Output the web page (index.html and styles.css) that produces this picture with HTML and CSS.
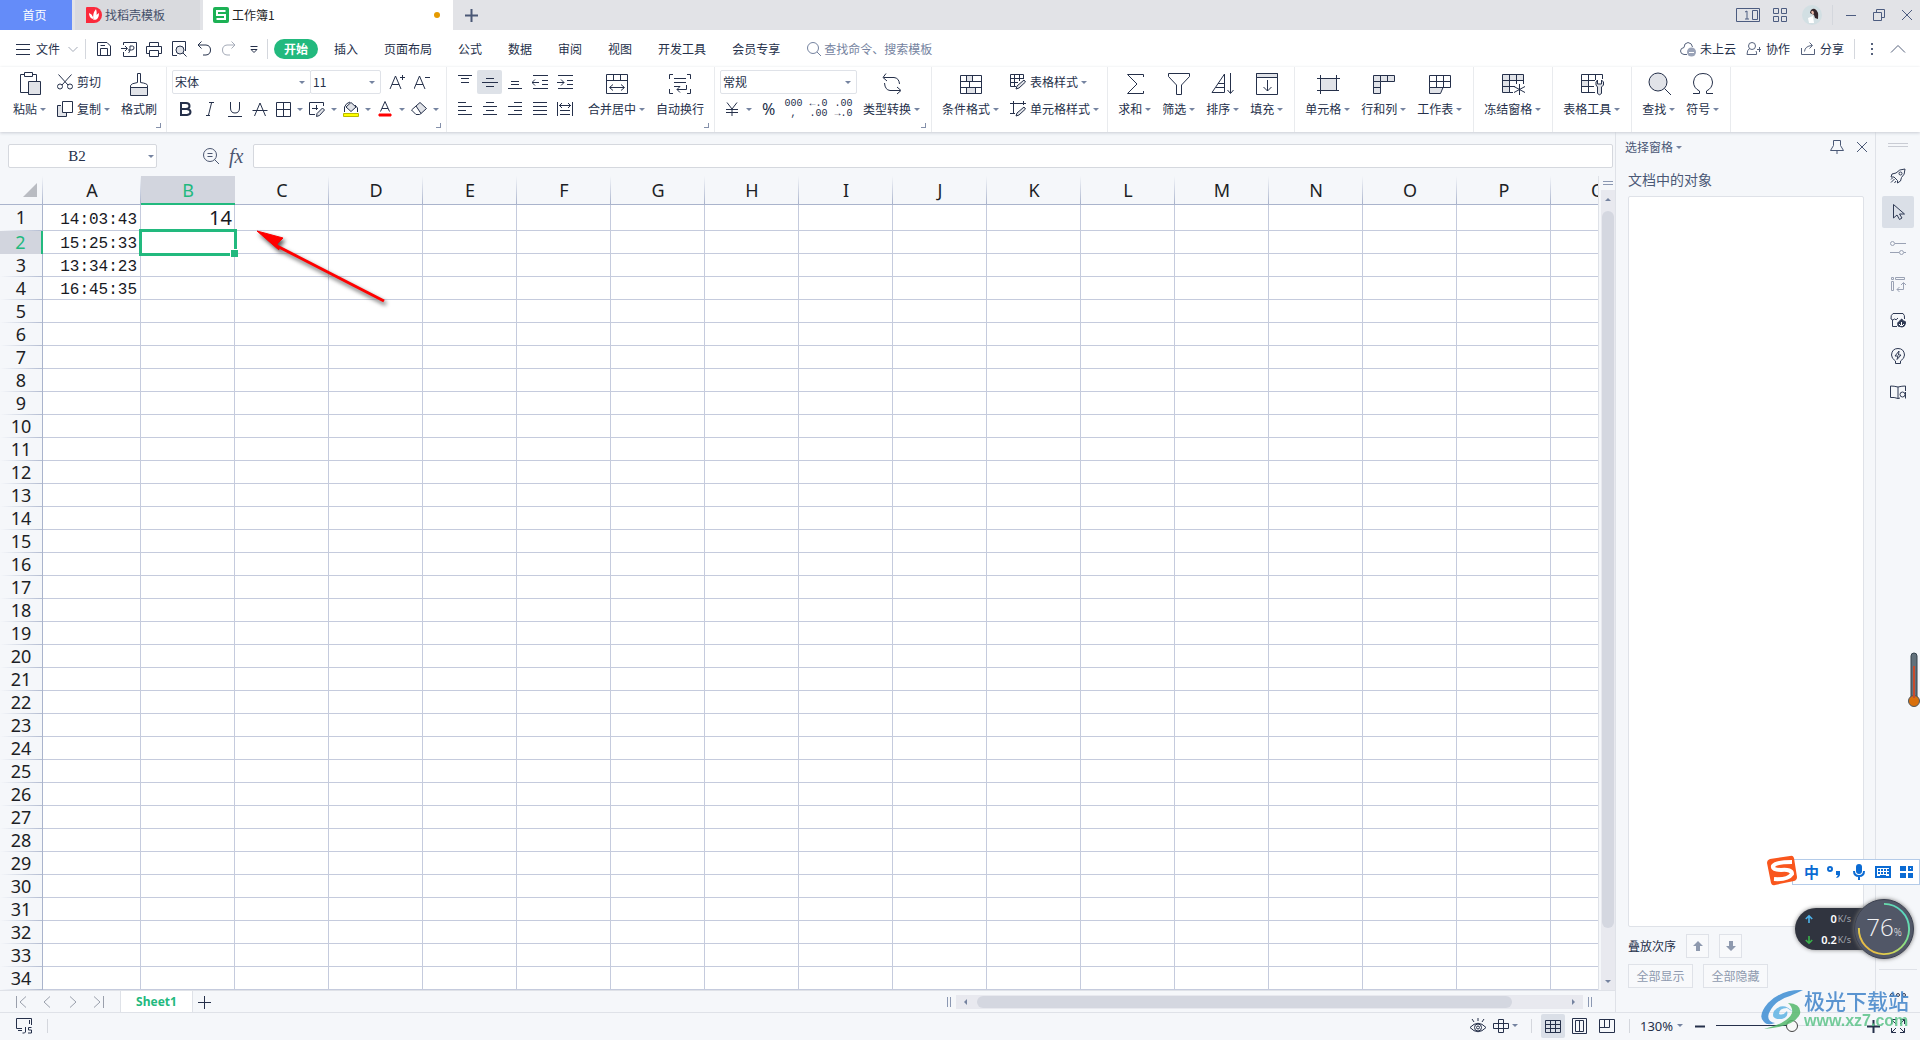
FILE: index.html
```html
<!DOCTYPE html>
<html lang="zh-CN">
<head>
<meta charset="utf-8">
<title>工作簿1</title>
<link rel="stylesheet" href="styles.css">
</head>
<body>
<svg class="sprite" aria-hidden="true">
  <symbol id="save" viewBox="0 0 16 16"><path d="M1.5 14.500V1.500H11L14.500 5V14.500ZM4.500 14V7.500H11.500V14M4.500 4.500H9"/></symbol>
  <symbol id="pdf" viewBox="0 0 16 16"><path d="M2.500 4V1.500H15.500V15.500H2.500V11M0 7.500H6M4 5L6.500 7.500L4 10M7.500 12C9 11 9 8 9 5H11.500Q13 5 13 7T10.500 9H7"/></symbol>
  <symbol id="print" viewBox="0 0 16 16"><path d="M3.500 5V1.500H12.500V5M3.500 12.500H.500V5.500H15.500V12.500H12.500M3.500 9.500H12.500V15.500H3.500Z"/></symbol>
  <symbol id="preview" viewBox="0 0 16 16"><path d="M6 14.500H1.500V.500H14.500V10"/><circle class="tint" cx="9" cy="9" r="4"/><path d="M12 12L15.500 15.500"/></symbol>
  <symbol id="undo" viewBox="0 0 16 16"><path d="M5.500 .500L2 4L5.500 7.500M2 4H10Q14.500 4.500 14.500 9T10 14H7"/></symbol>
  <symbol id="redo" viewBox="0 0 16 16"><path d="M10.500 .500L14 4L10.500 7.500M14 4H6Q1.500 4.500 1.500 9T6 14H9"/></symbol>
  <symbol id="more" viewBox="0 0 16 16"><path d="M4.500 5.500H11.500M5 8.500L8 11.500L11 8.500Z"/></symbol>
  <symbol id="burger" viewBox="0 0 16 16"><path d="M1 3.500H15M1 8.500H15M1 13.500H15"/></symbol>
  <symbol id="down" viewBox="0 0 16 16"><path d="M3.500 6L8 10.500L12.500 6"/></symbol>
  <symbol id="up" viewBox="0 0 16 16"><path d="M1 11.500L8 4.500L15 11.500"/></symbol>
  <symbol id="search" viewBox="0 0 16 16"><circle cx="7" cy="7" r="5.500"/><path d="M11 11L15 15"/></symbol>
  <symbol id="cloud" viewBox="0 0 16 16"><path d="M7 13.500H4Q.500 13 .500 10T4 6.500Q4 2 8 1.500Q12 2 12.500 6"/><circle class="solid" cx="11.500" cy="11" r="4.500"/><path d="M9 11.500H14" stroke="#fff"/></symbol>
  <symbol id="collab" viewBox="0 0 16 16"><circle cx="6" cy="5" r="3.500"/><path d="M3.500 7.500Q1 9 1 13.500H10.500Q11 12 10 10M11 8.500H15M13.500 6V11"/></symbol>
  <symbol id="share" viewBox="0 0 16 16"><path d="M1.500 7V13.500H14.500V8M4.500 10.500Q5 5 12 4.500M9.500 1.500L12.500 4.500L9.500 7.500"/></symbol>

  <symbol id="paste" viewBox="0 0 24 24"><path d="M11 20.500H2.500V2.500H6M15 2.500H18.500V9M6.500 .500H14.500V4.500H6.500Z"/><path class="tint" d="M10.500 9.500H22.500V22.500H10.500Z"/></symbol>
  <symbol id="brush" viewBox="0 0 24 24"><path d="M3.500 22.500V13.500Q4 11.500 10.500 10.500V1.500H13.500V10.500Q20.500 11.500 20.500 13.500V16M3.500 15.500H20.500"/><path class="tint" d="M3.500 15.500H20.500V23.500H3.500Z"/></symbol>
  <symbol id="cut" viewBox="0 0 16 16"><circle cx="3" cy="12.500" r="2.500"/><circle cx="13" cy="12.500" r="2.500"/><path d="M1.500 .500L11 11M14.500 .500L5 11"/></symbol>
  <symbol id="copy" viewBox="0 0 16 16"><path class="tint" d="M4 4.500H.500V15.500H9.500V12"/><path class="paper" d="M5.500 .500H15.500V11.500H5.500Z"/></symbol>
  <symbol id="font-plus" viewBox="0 0 16 16"><path d="M1 15L6.500 2L12 15M3 10.500H10M11 3.500H16M13.500 1V6"/></symbol>
  <symbol id="font-minus" viewBox="0 0 16 16"><path d="M0 15L5.500 2L11 15M2 10.500H9M11 3.500H16"/></symbol>
  <symbol id="bold" viewBox="0 0 16 16"><path stroke-width="2" d="M3 2H9Q12.500 2 12.500 5T9 8H4M4 2V14M3 14H10Q13.500 13.500 13.500 11T10 8"/></symbol>
  <symbol id="italic" viewBox="0 0 16 16"><path d="M7 1.500H12M4 14.500H8M9.500 2L6.500 14"/></symbol>
  <symbol id="underline" viewBox="0 0 16 16"><path d="M3.500 1V7Q3.500 12 8 12T12.500 7V1M1 15.500H15"/></symbol>
  <symbol id="strike" viewBox="0 0 16 16"><path d="M2.500 15L8 2L13.500 15M.500 9.500H15.500"/></symbol>
  <symbol id="border" viewBox="0 0 16 16"><path d="M1.500 1.500H15.500V15.500H1.500ZM8.500 1.500V15.500M1.500 8.500H15.500"/></symbol>
  <symbol id="draw" viewBox="0 0 16 16"><path d="M6 13.500H.500V1.500H14.500V5M3 7.500H9M7.500 4V9" /><path class="tint" d="M7.500 15.500L8 12.500L13.500 7L15.500 9L10.500 14.500Z"/></symbol>
  <symbol id="fill-color" viewBox="0 0 16 16"><path class="tint" d="M3 6L8 1.500L13 6L8 10.500Z"/><path d="M1.500 11V6Q3 2 7 1M14.500 11V7L12 4"/><path fill="#ff0" stroke="#b9b900" d="M.500 12.500H15.500V15.500H.500Z"/></symbol>
  <symbol id="text-color" viewBox="0 0 16 16"><path d="M3.500 10.500L8 .500L12.500 10.500M5 7.500H11"/><path fill="red" stroke="red" d="M2 13H14V15H2Z"/></symbol>
  <symbol id="eraser" viewBox="0 0 16 16"><path class="tint" d="M5 5L9 1.500L15.500 7.500L10 12.500Z"/><path d="M5 5L.500 9L5 13.500H8.500L10 12.500"/></symbol>
  <symbol id="v-top" viewBox="0 0 16 16"><path d="M1 1.500H15M4 4.500H12M4 8.500H12"/></symbol>
  <symbol id="v-mid" viewBox="0 0 16 16"><path d="M4 4.500H12M0 8.500H16M4 12.500H12"/></symbol>
  <symbol id="v-bot" viewBox="0 0 16 16"><path d="M4 7.500H12M4 10.500H12M1 14.500H15"/></symbol>
  <symbol id="outdent" viewBox="0 0 16 16"><path d="M1 1.500H16M10 6.500H16M10 10.500H16M1 14.500H16M0 8.500H7M3 5.500L0 8.500L3 11.500"/></symbol>
  <symbol id="indent" viewBox="0 0 16 16"><path d="M1 1.500H16M10 6.500H16M10 10.500H16M1 14.500H16M0 8.500H7M4 5.500L7 8.500L4 11.500"/></symbol>
  <symbol id="left" viewBox="0 0 16 16"><path d="M1 1.500H9M1 5.500H15M1 9.500H9M1 13.500H15"/></symbol>
  <symbol id="center" viewBox="0 0 16 16"><path d="M4 1.500H12M1 5.500H15M4 9.500H12M1 13.500H15"/></symbol>
  <symbol id="right" viewBox="0 0 16 16"><path d="M7 1.500H15M1 5.500H15M7 9.500H15M1 13.500H15"/></symbol>
  <symbol id="justify" viewBox="0 0 16 16"><path d="M1 1.500H15M1 5.500H15M1 9.500H15M1 13.500H15"/></symbol>
  <symbol id="distribute" viewBox="0 0 16 16"><path d="M.500 1V15M15.500 1V15M2 4.500H14M5 2L2.500 4.500L5 7M11 2L13.500 4.500L11 7M3 9.500H13M3 13.500H13"/></symbol>
  <symbol id="merge" viewBox="0 0 24 24"><path d="M1.500 2.500H22.500V21.500H1.500ZM1.500 8.500H22.500M8.500 2.500V8.500M15.500 2.500V8.500M5 15.500H19M8 12.500L4.500 15.500L8 18.500M16 12.500L19.500 15.500L16 18.500"/></symbol>
  <symbol id="wrap" viewBox="0 0 24 24"><path d="M5 2.500H1.500V7M19 2.500H22.500V7M1.500 17V21.500H5M22.500 17V21.500H19M6 6.500H18M6 10.500H18M6 14.500H12M18.500 13V17.500H9M12 14.500L9 17.500L12 20.500"/></symbol>
  <symbol id="yen" viewBox="0 0 16 16"><path d="M3 1.500L8 8L13 1.500M8 8V15M2 8.500H14M2 11.500H14"/></symbol>
  <symbol id="convert" viewBox="0 0 24 24"><path d="M6 1.500L3 5.500L7 9M3.500 5.500H14Q19 6 19.500 12M4.500 11Q5 18 10 18.500H20M17 15L21 18.500L17 22"/></symbol>
  <symbol id="cond" viewBox="0 0 24 24"><path class="tint" d="M7.500 3.500H13.500V9.500H7.500ZM7.500 15.500H16.500V21.500H7.500Z"/><path d="M1.500 3.500H22.500V21.500H1.500ZM1.500 9.500H22.500M1.500 15.500H22.500M7.500 3.500V9.500M13.500 3.500V9.500M10.500 9.500V15.500M7.500 15.500V21.500M16.500 15.500V21.500"/></symbol>
  <symbol id="table-style" viewBox="0 0 16 16"><path d="M6 12.500H.500V.500H13.500V5M.500 4.500H13.500M.500 8.500H8M4.500 .500V12.500M9.500 .500V7"/><path class="tint" d="M6 15L7 12L14 6L15.500 8L9 14Z"/></symbol>
  <symbol id="cell-style" viewBox="0 0 16 16"><path d="M0 2.500H16M3.500 0V12.500M0 12.500H5M13.500 0V4"/><path class="tint" d="M6 15L7 12L14 6L15.500 8L9 14Z"/></symbol>
  <symbol id="sum" viewBox="0 0 24 24"><path d="M20.500 5V2.500H4.500L14 12L4.500 21.500H20.500V19"/></symbol>
  <symbol id="filter" viewBox="0 0 24 24"><path d="M1.500 1.500H22.500V4.500L14.500 13V22.500H9.500V13L1.500 4.500Z"/></symbol>
  <symbol id="sort" viewBox="0 0 24 24"><path d="M1 20.500L13.500 2V20.500ZM7 11.500H13M5 15.500H13M19.500 1V21M16.500 18L19.500 21.500L22.500 18"/></symbol>
  <symbol id="fill" viewBox="0 0 24 24"><path d="M1.500 1.500H22.500V22.500H1.500Z"/><path class="tint" d="M1.500 1.500H22.500V5.500H1.500Z"/><path d="M12.500 8V19M8.500 15L12.500 19L16.500 15"/></symbol>
  <symbol id="cell" viewBox="0 0 24 24"><path class="tint" d="M4.500 6.500H20.500V18.500H4.500Z"/><path d="M1 6.500H24M4.500 3V22M20.500 3V16M1 18.500H17M20 18.500H23"/></symbol>
  <symbol id="rowcol" viewBox="0 0 24 24"><path class="tint" d="M1.500 3.500H22.500V9.500H8.500V21.500H1.500Z"/><path d="M8.500 3.500V9.500H1.500M15.500 3.500V9.500M1.500 15.500H8.500"/></symbol>
  <symbol id="sheet" viewBox="0 0 24 24"><path class="tint" d="M1.500 15.500H15L12.500 21.500H1.500Z"/><path d="M1.500 3.500H22.500V15.500H1.500ZM1.500 9.500H22.500M8.500 3.500V15.500M15.500 3.500V15.500"/></symbol>
  <symbol id="freeze" viewBox="0 0 24 24"><path class="tint" d="M1.500 2.500H22.500V8.500H8.500V20.500H1.500Z"/><path d="M8.500 2.500V20.500H12M15.500 2.500V12M22.500 8V12M1.500 8.500H9M1.500 14.500H14M18.500 12V23M13 14.500L24 20.500M24 14.500L13 20.500"/></symbol>
  <symbol id="tools" viewBox="0 0 24 24"><path class="tint" d="M1.500 8.500H8.500V14.500H1.500Z"/><path d="M15 20.500H1.500V2.500H22.500V7M1.500 8.500H15M1.500 14.500H14M8.500 2.500V20.500M15.500 2.500V8"/><path class="tint" d="M17.500 8L16 10V13L17.500 15V21.500Q19.500 24 21.500 21.500V15L23.500 13V10L21.500 8V12H17.500Z"/></symbol>
  <symbol id="find" viewBox="0 0 24 24"><circle class="tint" cx="11" cy="10" r="9"/><path d="M17.500 16.500L24 23"/></symbol>
  <symbol id="omega" viewBox="0 0 24 24"><path d="M2 21.500H8.500V19Q2.500 16 2.500 10Q3.500 1.500 12 1.500T21.500 10Q21.500 16 15.500 19V21.500H22"/></symbol>

  <symbol id="zoom-out" viewBox="0 0 16 16"><circle cx="7" cy="7" r="6.500"/><path d="M11.500 11.500L16 16M4.500 5.500H9.500M4.500 8.500H9.500"/></symbol>
  <symbol id="pin" viewBox="0 0 16 16"><path d="M4.500 1.500H11.500V6.500L14.500 11.500H1.500L4.500 6.500ZM8 11.500V15"/></symbol>
  <symbol id="close" viewBox="0 0 16 16"><path d="M3 3L13 13M13 3L3 13"/></symbol>
  <symbol id="min" viewBox="0 0 16 16"><path d="M3 8.500H13"/></symbol>
  <symbol id="restore" viewBox="0 0 16 16"><path d="M2.500 5.500H10.500V13.500H2.500ZM5.500 5V2.500H13.500V10.500H11"/></symbol>
  <symbol id="plus" viewBox="0 0 16 16"><path d="M2 8.500H15M8.500 2V15"/></symbol>
  <symbol id="apps" viewBox="0 0 16 16"><path d="M1.500 1.500H6.500V6.500H1.500ZM9.500 1.500H14.500V6.500H9.500ZM1.500 9.500H6.500V14.500H1.500ZM9.500 9.500H14.500V14.500H9.500Z"/></symbol>

  <symbol id="rocket" viewBox="0 0 16 16"><path d="M15 1Q9 1 6 5L2 6L1 9L4 9L7.500 12.500V15L10.500 13L11.500 9.500Q15 7 15 1ZM4.500 11L1 14.500M6 13L4.500 15M2.500 10L1 11.500"/><circle cx="10.500" cy="5.500" r="1.500"/></symbol>
  <symbol id="cursor" viewBox="0 0 16 16"><path d="M3.500 .500V14L7 11L9.500 15.500L12 14L9.500 10H14.500Z"/></symbol>
  <symbol id="sliders" viewBox="0 0 16 16"><circle cx="2.500" cy="3.500" r="2"/><path d="M5 3.500H16M0 12.500H9M14 12.500H16"/><circle cx="11.500" cy="12.500" r="2"/></symbol>
  <symbol id="layout" viewBox="0 0 16 16"><path d="M1.500 1.500H3.500V3.500H1.500ZM5.500 1.500H14.500V3.500H5.500ZM1.500 5.500H3.500V14.500H1.500ZM13.500 7V13.500H7M11 9L13.500 6.500L16 9M9.500 11L7 13.500L9.500 16"/></symbol>
  <symbol id="store" viewBox="0 0 16 16"><path d="M7 14.500H2.500V8M1 7Q.500 3 3 1.500H13Q15 3 14.500 7M1 7Q3 9 4.500 7Q6 9 8 6"/><path fill="currentColor" d="M8 14Q7 10 9 9.500Q10 9 10.500 8Q12 6 12.500 8L13.500 9Q16 9 15.500 11Q15 15 12 15Z"/><path stroke="#fff" d="M11.500 10V14M9 12L11 14M14 12L12 14"/></symbol>
  <symbol id="idea" viewBox="0 0 16 16"><path d="M5.500 13Q1.500 10.500 1.500 7Q2 .500 8 .500T14.500 7Q14.500 10.500 10.500 13V15.500H5.500ZM9 3L5 8H8L7 11.500L11 7H8.500Z"/></symbol>
  <symbol id="book" viewBox="0 0 16 16"><path d="M8 3Q4 2 .500 2V13.500Q4 13 8 14.500V3Q12 2 15.500 2V7M8 14.500L10 14"/><circle cx="12.500" cy="10.500" r="2.500"/><path d="M15.500 8V14.500"/></symbol>

  <symbol id="js" viewBox="0 0 16 16"><path d="M6 10.500H.500V.500H15.500V7M13.500 2V6M2 12.500H6M9.500 9V14Q9 15.500 6.500 15M15.500 9.500H12.500V12H15.500V15H12"/></symbol>
  <symbol id="eye" viewBox="0 0 16 16"><path d="M0 9.500Q8 1 16 9.500Q8 18 0 9.500ZM8 0V3M2 1L4 4M14 1L12 4"/><circle cx="8" cy="9.500" r="3.500"/><circle cx="8" cy="9.500" r="1.500"/></symbol>
  <symbol id="cross" viewBox="0 0 16 16"><path d="M5.500 1.500H10.500V14.500H5.500ZM.500 5.500H15.500V10.500H.500Z"/></symbol>
  <symbol id="view-grid" viewBox="0 0 16 16"><path d="M.500 2.500H15.500V14.500H.500ZM.500 6.500H15.500M.500 10.500H15.500M5.500 2.500V14.500M10.500 2.500V14.500"/></symbol>
  <symbol id="view-page" viewBox="0 0 16 16"><path d="M.500 .500H14.500V15.500H.500ZM3.500 2.500H11.500V13.500H3.500ZM7.500 2.500V13.500"/></symbol>
  <symbol id="view-break" viewBox="0 0 16 16"><path d="M.500 1.500H15.500V14.500H.500ZM.500 9.500H10.500V1.500M5.500 1.500V9.500"/></symbol>
  <symbol id="full" viewBox="0 0 16 16"><path d="M1.500 6V1.500H6M10 1.500H14.500V6M14.500 10V14.500H10M6 14.500H1.500V10M1.500 1.500L6 6M14.500 1.500L10 6M14.500 14.500L10 10M1.500 14.500L6 10"/></symbol>
  <symbol id="first" viewBox="0 0 16 16"><path d="M3.500 2V14M13 2.500L7 8L13 13.500"/></symbol>
  <symbol id="prev" viewBox="0 0 16 16"><path d="M11 2.500L5 8L11 13.500"/></symbol>
  <symbol id="next" viewBox="0 0 16 16"><path d="M5 2.500L11 8L5 13.500"/></symbol>
  <symbol id="last" viewBox="0 0 16 16"><path d="M12.500 2V14M3 2.500L9 8L3 13.500"/></symbol>
</svg>

<div class="app">
  <header class="tabs">
    <button class="home-tab">首页</button>
    <button class="doc-tab"><svg class="i16" viewBox="0 0 16 16"><path fill="#fb2a3c" d="M0 1Q0 0 1 0H8A8 8 0 0 1 8 16H0Z"/><path fill="#fff" d="M7 12Q3 11 3 6Q6 7 7 10ZM7.500 13Q6 7 10 2Q12 8 8.500 13ZM9 13Q9 8 13 6Q13 12 9 13Z"/></svg>找稻壳模板</button>
    <button class="doc-tab open"><svg class="i16" viewBox="0 0 16 16"><rect width="16" height="16" rx="2" fill="#1cb155"/><path stroke="#fff" stroke-width="2" d="M12.500 4H4V8H12V12H3.500"/></svg>工作簿1<span class="dot"></span></button>
    <button class="icon-btn new-tab" aria-label="新建"><svg class="i16 heavy"><use href="#plus"/></svg></button>
    <div class="window-tools">
      <svg class="badge-icon" viewBox="0 0 24 16"><path d="M.500 1.500H23.500V14.500H.500ZM16.500 3.500H21.500V12.500H16.500ZM9 5L11 4V12M9 12H13"/></svg>
      <svg class="i16"><use href="#apps"/></svg>
      <svg class="avatar" viewBox="0 0 20 20"><circle cx="10" cy="10" r="10" fill="#d2dfe3"/><path fill="#33262b" d="M8 8Q9 3 13 4Q17 6 16 14L13 13L12 10L10 9Z"/><path fill="#eebfae" d="M9 7Q11 4 12 8L11 10Z"/><path fill="#fff" d="M6 13L11 11L12 18H7Z"/></svg>
      <span class="bar"></span>
      <button class="icon-btn" aria-label="最小化"><svg class="i16"><use href="#min"/></svg></button>
      <button class="icon-btn" aria-label="还原"><svg class="i16"><use href="#restore"/></svg></button>
      <button class="icon-btn" aria-label="关闭"><svg class="i16"><use href="#close"/></svg></button>
    </div>
  </header>

  <nav class="menu">
    <button class="file-btn"><svg class="i16"><use href="#burger"/></svg>文件<svg class="i16 muted"><use href="#down"/></svg></button>
    <span class="bar"></span>
    <div class="quick">
      <button class="icon-btn" aria-label="保存"><svg class="i16"><use href="#save"/></svg></button>
      <button class="icon-btn" aria-label="输出为PDF"><svg class="i16"><use href="#pdf"/></svg></button>
      <button class="icon-btn" aria-label="打印"><svg class="i16"><use href="#print"/></svg></button>
      <button class="icon-btn" aria-label="打印预览"><svg class="i16"><use href="#preview"/></svg></button>
      <button class="icon-btn" aria-label="撤销"><svg class="i16"><use href="#undo"/></svg></button>
      <button class="icon-btn muted" aria-label="恢复"><svg class="i16"><use href="#redo"/></svg></button>
      <button class="icon-btn" aria-label="更多"><svg class="i16"><use href="#more"/></svg></button>
    </div>
    <span class="bar"></span>
    <div class="menu-items">
      <button class="current">开始</button>
      <button>插入</button>
      <button>页面布局</button>
      <button>公式</button>
      <button>数据</button>
      <button>审阅</button>
      <button>视图</button>
      <button>开发工具</button>
      <button>会员专享</button>
    </div>
    <label class="finder"><svg class="i16"><use href="#search"/></svg><input type="text" placeholder="查找命令、搜索模板"></label>
    <div class="account">
      <button><svg class="i16"><use href="#cloud"/></svg>未上云</button>
      <button><svg class="i16"><use href="#collab"/></svg>协作</button>
      <button><svg class="i16"><use href="#share"/></svg>分享</button>
      <span class="bar"></span>
      <button class="icon-btn" aria-label="更多选项"><svg class="i16" viewBox="0 0 16 16"><path fill="currentColor" stroke="none" d="M7 2H9V4H7ZM7 7H9V9H7ZM7 12H9V14H7Z"/></svg></button>
      <button class="icon-btn" aria-label="收起功能区"><svg class="i16"><use href="#up"/></svg></button>
    </div>
  </nav>

  <section class="ribbon">
    <div class="group clipboard">
      <button class="big"><svg class="i24"><use href="#paste"/></svg><span class="caret">粘贴</span></button>
      <div class="rows">
        <button class="small"><svg class="i16"><use href="#cut"/></svg>剪切</button>
        <button class="small caret"><svg class="i16"><use href="#copy"/></svg>复制</button>
      </div>
      <button class="big"><svg class="i24"><use href="#brush"/></svg><span>格式刷</span></button>
      <span class="launcher"></span>
    </div>
    <div class="group tight">
      <div class="rows">
        <div class="line">
          <span class="picker family caret"><select aria-label="字体"><option>宋体</option></select></span>
          <span class="picker size caret"><select aria-label="字号"><option>11</option></select></span>
          <button class="tool first" aria-label="增大字号"><svg class="i16"><use href="#font-plus"/></svg></button>
          <button class="tool" aria-label="减小字号"><svg class="i16"><use href="#font-minus"/></svg></button>
        </div>
        <div class="line">
          <button class="tool" aria-label="加粗"><svg class="i16"><use href="#bold"/></svg></button>
          <button class="tool" aria-label="倾斜"><svg class="i16"><use href="#italic"/></svg></button>
          <button class="tool" aria-label="下划线"><svg class="i16"><use href="#underline"/></svg></button>
          <button class="tool" aria-label="删除线"><svg class="i16"><use href="#strike"/></svg></button>
          <button class="tool drop caret" aria-label="边框"><svg class="i16"><use href="#border"/></svg></button>
          <button class="tool drop caret" aria-label="绘图边框"><svg class="i16"><use href="#draw"/></svg></button>
          <button class="tool drop caret" aria-label="填充颜色"><svg class="i16"><use href="#fill-color"/></svg></button>
          <button class="tool drop caret" aria-label="字体颜色"><svg class="i16"><use href="#text-color"/></svg></button>
          <button class="tool drop caret" aria-label="清除"><svg class="i16"><use href="#eraser"/></svg></button>
        </div>
      </div>
      <span class="launcher"></span>
    </div>
    <div class="group align">
      <div class="rows">
        <div class="line">
          <button class="tool" aria-label="顶端对齐"><svg class="i16"><use href="#v-top"/></svg></button>
          <button class="tool on" aria-label="垂直居中"><svg class="i16"><use href="#v-mid"/></svg></button>
          <button class="tool" aria-label="底端对齐"><svg class="i16"><use href="#v-bot"/></svg></button>
          <button class="tool" aria-label="减少缩进"><svg class="i16"><use href="#outdent"/></svg></button>
          <button class="tool" aria-label="增加缩进"><svg class="i16"><use href="#indent"/></svg></button>
        </div>
        <div class="line">
          <button class="tool" aria-label="左对齐"><svg class="i16"><use href="#left"/></svg></button>
          <button class="tool" aria-label="居中"><svg class="i16"><use href="#center"/></svg></button>
          <button class="tool" aria-label="右对齐"><svg class="i16"><use href="#right"/></svg></button>
          <button class="tool" aria-label="两端对齐"><svg class="i16"><use href="#justify"/></svg></button>
          <button class="tool" aria-label="分散对齐"><svg class="i16"><use href="#distribute"/></svg></button>
        </div>
      </div>
      <button class="big"><svg class="i24"><use href="#merge"/></svg><span class="caret">合并居中</span></button>
      <button class="big"><svg class="i24"><use href="#wrap"/></svg><span>自动换行</span></button>
      <span class="launcher"></span>
    </div>
    <div class="group number">
      <div class="rows">
        <div class="line"><span class="picker format caret"><select aria-label="数字格式"><option>常规</option></select></span></div>
        <div class="line">
          <button class="tool drop wide caret" aria-label="货币"><svg class="i16"><use href="#yen"/></svg></button>
          <button class="tool percent">%</button>
          <button class="tool digits">000<br>,</button>
          <button class="tool digits">←.0<br>.00</button>
          <button class="tool digits">.00<br>→.0</button>
        </div>
      </div>
      <button class="big"><svg class="i24"><use href="#convert"/></svg><span class="caret">类型转换</span></button>
      <span class="launcher"></span>
    </div>
    <div class="group styles">
      <button class="big"><svg class="i24"><use href="#cond"/></svg><span class="caret">条件格式</span></button>
      <div class="rows">
        <button class="small caret"><svg class="i16"><use href="#table-style"/></svg>表格样式</button>
        <button class="small caret"><svg class="i16"><use href="#cell-style"/></svg>单元格样式</button>
      </div>
    </div>
    <div class="group">
      <button class="big"><svg class="i24"><use href="#sum"/></svg><span class="caret">求和</span></button>
      <button class="big"><svg class="i24"><use href="#filter"/></svg><span class="caret">筛选</span></button>
      <button class="big"><svg class="i24"><use href="#sort"/></svg><span class="caret">排序</span></button>
      <button class="big"><svg class="i24"><use href="#fill"/></svg><span class="caret">填充</span></button>
    </div>
    <div class="group">
      <button class="big"><svg class="i24"><use href="#cell"/></svg><span class="caret">单元格</span></button>
      <button class="big"><svg class="i24"><use href="#rowcol"/></svg><span class="caret">行和列</span></button>
      <button class="big"><svg class="i24"><use href="#sheet"/></svg><span class="caret">工作表</span></button>
    </div>
    <div class="group">
      <button class="big"><svg class="i24"><use href="#freeze"/></svg><span class="caret">冻结窗格</span></button>
    </div>
    <div class="group">
      <button class="big"><svg class="i24"><use href="#tools"/></svg><span class="caret">表格工具</span></button>
    </div>
    <div class="group">
      <button class="big"><svg class="i24"><use href="#find"/></svg><span class="caret">查找</span></button>
      <button class="big"><svg class="i24"><use href="#omega"/></svg><span class="caret">符号</span></button>
    </div>
  </section>

  <main class="work">
    <section class="editor">
      <div class="formula">
        <span class="name-box caret"><input type="text" value="B2" aria-label="名称框"></span>
        <div class="fx-tools"><svg class="i16"><use href="#zoom-out"/></svg><span class="fx">fx</span></div>
        <input class="formula-input" type="text" aria-label="编辑栏">
      </div>
      <div class="sheet">
        <div class="grid-view">
          <table class="cells">
            <thead></thead>
            <tbody></tbody>
          </table>
          <svg class="pointer" viewBox="0 0 140 84"><path class="shaft" d="M24 20L131 75"/><path class="head" d="M4 5L30 12L24 18L26 24Z"/></svg>
        </div>
        <div class="v-side">
          <span class="grip"></span>
          <div class="v-scroll"><span class="arrow a-up"></span><span class="v-thumb"></span><span class="arrow a-down"></span></div>
        </div>
      </div>
      <div class="sheet-bar">
        <div class="sheet-nav">
          <button class="icon-btn" aria-label="第一个"><svg class="i16"><use href="#first"/></svg></button>
          <button class="icon-btn" aria-label="上一个"><svg class="i16"><use href="#prev"/></svg></button>
          <button class="icon-btn" aria-label="下一个"><svg class="i16"><use href="#next"/></svg></button>
          <button class="icon-btn" aria-label="最后一个"><svg class="i16"><use href="#last"/></svg></button>
        </div>
        <button class="sheet-tab">Sheet1</button>
        <button class="icon-btn add-sheet" aria-label="新建工作表"><svg class="i16"><use href="#plus"/></svg></button>
        <div class="h-side">
          <span class="grip-v"></span>
          <div class="h-scroll"><span class="arrow a-left"></span><span class="h-thumb"></span><span class="arrow a-right"></span></div>
          <span class="grip-v"></span>
        </div>
      </div>
    </section>

    <aside class="pane">
      <div class="pane-head"><span class="caret">选择窗格</span><button class="icon-btn" aria-label="固定"><svg class="i16"><use href="#pin"/></svg></button><button class="icon-btn" aria-label="关闭窗格"><svg class="i16"><use href="#close"/></svg></button></div>
      <h2>文档中的对象</h2>
      <div class="objects"></div>
      <div class="order">叠放次序
        <button aria-label="上移"><svg class="i16" viewBox="0 0 16 16"><path fill="currentColor" stroke="none" d="M8 3L13 8H10V13H6V8H3Z"/></svg></button>
        <button aria-label="下移"><svg class="i16" viewBox="0 0 16 16"><path fill="currentColor" stroke="none" d="M8 13L13 8H10V3H6V8H3Z"/></svg></button>
      </div>
      <div class="show-all"><button>全部显示</button><button>全部隐藏</button></div>
    </aside>

    <aside class="strip">
      <span class="strip-grip"></span>
      <button aria-label="推荐"><svg class="i16"><use href="#rocket"/></svg></button>
      <button class="on" aria-label="选择"><svg class="i16"><use href="#cursor"/></svg></button>
      <button class="dim" aria-label="属性"><svg class="i16"><use href="#sliders"/></svg></button>
      <button class="dim" aria-label="版式"><svg class="i16"><use href="#layout"/></svg></button>
      <button aria-label="素材"><svg class="i16"><use href="#store"/></svg></button>
      <button aria-label="灵感"><svg class="i16"><use href="#idea"/></svg></button>
      <button aria-label="帮助"><svg class="i16"><use href="#book"/></svg></button>
      <div class="strip-end"><svg class="i16" viewBox="0 0 16 16"><circle cx="2" cy="8" r="1.500"/><circle cx="8" cy="8" r="1.500"/><circle cx="14" cy="8" r="1.500"/></svg></div>
    </aside>
  </main>

  <footer class="status">
    <svg class="i16"><use href="#js"/></svg>
    <span class="bar"></span>
    <div class="status-end">
      <svg class="i16"><use href="#eye"/></svg>
      <span class="caret move"><svg class="i16"><use href="#cross"/></svg></span>
      <span class="bar"></span>
      <div class="views">
        <button class="on" aria-label="普通视图"><svg class="i16"><use href="#view-grid"/></svg></button>
        <button aria-label="页面布局视图"><svg class="i16"><use href="#view-page"/></svg></button>
        <button aria-label="分页预览"><svg class="i16"><use href="#view-break"/></svg></button>
      </div>
      <span class="bar"></span>
      <span class="zoom caret">130%</span>
      <button class="icon-btn" aria-label="缩小"><svg class="i16 heavy"><use href="#min"/></svg></button>
      <input class="zoom-range" type="range" min="0" max="100" value="53" aria-label="缩放">
      <button class="icon-btn" aria-label="放大"><svg class="i16 heavy"><use href="#plus"/></svg></button>
      <button class="icon-btn" aria-label="全屏"><svg class="i16"><use href="#full"/></svg></button>
    </div>
  </footer>
</div>

<svg class="thermo" viewBox="0 0 12 56"><rect x="3" y="1" width="6" height="48" rx="3" fill="#62717b" stroke="#34434d"/><circle cx="6" cy="49" r="5.500" fill="#d9700c" stroke="#4c5961"/><path stroke="#c94b2c" stroke-width="2" d="M6 14V46"/></svg>

<div class="ime">
  <svg class="ime-logo" viewBox="0 0 32 32"><path fill="#f9561d" d="M1 8Q1 5 4 4L24 1Q27 0 28 3L31 22Q31 25 28 26L9 30Q6 31 5 28Z"/><path stroke="#fff" stroke-width="4" d="M26 7Q10 7 7 11Q6 15 15 15Q26 14 26 19Q22 25 8 24"/></svg>
  <b>中</b>
  <svg class="i16" viewBox="0 0 16 16"><circle cx="3" cy="5" r="2" stroke-width="2"/><path fill="currentColor" stroke="none" d="M9 7H13V11Q12 14 9 14L11 11H9Z"/></svg>
  <svg class="i16" viewBox="0 0 16 16"><rect x="5" y="0" width="6" height="10" rx="3" fill="currentColor" stroke="none"/><path stroke-width="2" d="M3 7Q3 12 8 12T13 7M8 12V16"/></svg>
  <svg class="i16" viewBox="0 0 16 16"><path stroke-width="2" d="M1 3H15V13H1Z"/><path stroke-width="2" stroke-dasharray="2 1" d="M3 6H14M3 9H14"/><path d="M5 11.500H11"/></svg>
  <svg class="i16" viewBox="0 0 16 16"><path fill="currentColor" stroke="none" d="M1 2H7V7H1ZM1 9H7V14H1ZM9 9H14V14H9Z"/><path stroke-width="2" d="M10 3H13V6H10Z"/></svg>
</div>

<div class="meter">
  <div class="rates">
    <p><svg class="i8 blue" viewBox="0 0 10 10"><path stroke-width="2" d="M5 10V2M1 5L5 1L9 5"/></svg><b>0</b>K/s</p>
    <p><svg class="i8 green" viewBox="0 0 10 10"><path stroke-width="2" d="M5 0V8M1 5L5 9L9 5"/></svg><b>0.2</b>K/s</p>
  </div>
  <div class="dial">
    <svg viewBox="0 0 60 60"><defs><linearGradient id="arc" x1="0" y1="1" x2="1" y2="0"><stop offset="0" stop-color="#f0a53c"/><stop offset=".3" stop-color="#dcd350"/><stop offset=".6" stop-color="#7fe08a"/><stop offset="1" stop-color="#47d5dc"/></linearGradient></defs><path stroke="url(#arc)" stroke-width="2" d="M30 4A26 26 0 1 1 4 29"/></svg>
    <span>76<small>%</small></span>
  </div>
</div>

<div class="watermark">
  <svg viewBox="0 0 44 42"><path fill="#3d8ed4" d="M43 1Q22 0 8 14Q-3 27 4 33Q7 37 15 34Q6 32 9 24Q15 11 30 7Q37 4 43 1Z"/><path fill="#55b86c" d="M28 14Q42 15 40 25Q34 38 4 40Q28 34 32 24Q33 18 28 14Z"/><path fill="#5fb4e4" d="M33 23Q23 12 14 22Q10 31 22 30Q29 28 27 22Q23 27 19 25Q19 19 27 19Z"/></svg>
  <div><strong>极光下载站</strong><em>www.xz7.com</em></div>
</div>
<script src="app.js"></script>
</body>
</html>
```
FILE: styles.css
```css
* { box-sizing: border-box; }

:root {
  --ink: #25304a;
  --soft: #7583a0;
  --green: #22b97e;
  --line: #dfe2e8;
  --panel: #f5f7fa;
  --cell: #c5cbdd;
}

body {
  margin: 0;
  font: 12px/16px "Noto Sans CJK SC", sans-serif;
  color: var(--ink);
  background: var(--panel);
  overflow: hidden;
}

button, input, select {
  font: inherit;
  color: inherit;
  background: none;
  border: 0;
  padding: 0;
  margin: 0;
  outline: 0;
}

button { display: flex; align-items: center; justify-content: center; white-space: nowrap; }
p, h2 { margin: 0; font-weight: 400; }

svg { fill: none; stroke: currentColor; flex: none; overflow: visible; }
.sprite { display: none; }
.tint { fill: #e1e3e8; }
.paper { fill: #fff; }
.solid { fill: #9aa3b8; stroke: none; }
.i16 { width: 16px; height: 16px; }
.i24 { width: 24px; height: 24px; }
.i8 { width: 8px; height: 8px; }
.heavy { stroke-width: 2; }
.muted { color: #a5abb8; }
.bar { width: 1px; height: 20px; background: #d4d7dd; flex: none; }
.icon-btn { width: 25px; height: 24px; flex: none; }

.caret::after {
  content: "";
  flex: none;
  margin-left: 3px;
  border: solid transparent;
  border-width: 3px 3px 0;
  border-top-color: var(--soft);
}

.app { display: flex; flex-direction: column; min-height: 100vh; }

/* Document tabs */
.tabs { display: flex; gap: 3px; height: 30px; background: #e2e3e7; }
.home-tab { width: 72px; padding-right: 3px; color: #fff; background: #648cf9; }
.doc-tab { width: 125px; padding-left: 11px; gap: 3px; justify-content: flex-start; background: #d9dade; color: #45506a; }
.doc-tab svg { stroke: none; }
.doc-tab.open { width: 250px; padding-left: 10px; background: #fff; color: #222; }
.dot { width: 6px; height: 6px; border-radius: 3px; background: #e59a00; margin-left: auto; margin-right: 13px; }
.new-tab { height: 30px; margin-left: 2px; color: #4a5876; }
.window-tools { display: flex; align-items: center; margin-left: auto; color: #4c5c80; }
.window-tools .icon-btn { width: 28px; }
.window-tools .icon-btn:last-child { width: 27px; }
.window-tools .bar { margin: 0 4px 0 10px; }
.badge-icon { width: 24px; height: 16px; margin-right: 12px; }
.avatar { width: 20px; height: 20px; margin-left: 14px; stroke: none; }

/* Menu line */
.menu { display: flex; align-items: center; height: 37px; padding: 0 11px 0 15px; background: #fff; }
.file-btn { gap: 5px; margin-right: 4px; }
.quick { display: flex; padding: 0 1px 0 5px; }
.menu-items { display: flex; gap: 26px; margin-left: 6px; }
.menu-items .current { width: 44px; height: 20px; border-radius: 10px; background: var(--green); color: #fff; font-weight: 700; margin-right: -10px; }
.finder { display: flex; align-items: center; gap: 2px; margin-left: 26px; color: var(--soft); }
.finder input { width: 130px; }
.finder input::placeholder { color: var(--soft); opacity: 1; }
.account { display: flex; align-items: center; gap: 10px; margin-left: auto; }
.account button { gap: 4px; }
.account svg { color: #56627c; }
.account .bar { margin-right: -4px; }
.account .icon-btn { width: 22px; }
.account .icon-btn:last-child { margin-left: -6px; }

/* Ribbon */
.ribbon { display: flex; height: 65px; background: #fff; box-shadow: 0 1px 3px #c9ccd4; position: relative; }
.group { position: relative; display: flex; gap: 11px; padding: 3px 11px 4px 10px; border-right: 1px solid #e9ebee; }
.group.clipboard { padding-left: 13px; padding-right: 9px; }
.group.tight { padding-left: 5px; padding-right: 4px; }
.group.align { padding-left: 5px; padding-right: 10px; }
.group.number { gap: 7px; padding-left: 5px; }
.group.styles { padding-right: 8px; }
.big { flex-direction: column; justify-content: flex-start; gap: 5px; padding-top: 2px; }
.big span { display: flex; align-items: center; }
.rows { display: flex; flex-direction: column; gap: 3px; }
.line { display: flex; height: 24px; }
.small { height: 24px; justify-content: flex-start; gap: 4px; }
.small.caret::after { margin-left: -1px; }
.tool { width: 25px; height: 24px; flex: none; }
.tool.first { margin-left: 3px; }
.tool.on { background: #dee2e8; border-radius: 2px; }
.tool.drop { width: 34px; }
.tool.drop::after { margin-left: 6px; }
.tool.wide { width: 36px; }
.percent { font: 16px/16px "Noto Sans", sans-serif; }
.digits { font: 10px/10px "Liberation Mono", monospace; text-align: center; }
.picker { display: flex; align-items: center; height: 24px; border: 1px solid var(--line); border-radius: 2px; padding: 0 5px 0 2px; }
.picker select { flex: 1; min-width: 0; appearance: none; }
.family { width: 139px; }
.size { width: 71px; margin-left: -1px; }
.format { width: 137px; margin-right: -1px; }
.launcher { position: absolute; right: 5px; bottom: 4px; width: 5px; height: 5px; border: solid #8490aa; border-width: 0 1px 1px 0; }

/* Work area */
.work { flex: 1; display: grid; grid-template-columns: minmax(0, 1fr) 260px 44px; }
.editor { display: flex; flex-direction: column; min-width: 0; border-right: 1px solid var(--line); }
.formula { display: flex; align-items: center; height: 44px; padding: 4px 2px 0 8px; }
.formula input { background: #fff; }
.name-box { display: flex; align-items: center; width: 149px; height: 24px; padding-right: 2px; background: #fff; border: 1px solid #d5d8de; border-radius: 2px; }
.name-box input { flex: 1; min-width: 0; text-align: center; font: 15px/20px "Liberation Serif", serif; }
.fx-tools { display: flex; align-items: center; gap: 10px; margin: 0 10px 0 46px; color: #4b5670; }
.fx { font: italic 20px/20px "Liberation Serif", serif; width: 14px; }
.formula-input { flex: 1; height: 24px; border: 1px solid #d5d8de; border-radius: 2px; }

.sheet { flex: 1; display: grid; grid-template-columns: minmax(0, 1fr) 17px; }
.grid-view { position: relative; overflow: hidden; }
.cells { table-layout: fixed; width: 1645px; border-spacing: 0; font: 18px/20px "Noto Sans", sans-serif; color: #17191f; }
.cells th, .cells td { padding: 0; height: 23px; overflow: hidden; }
.cells th { font-weight: 400; color: #1d1f26; }
.cells thead th {
  height: 29px;
  width: 94px;
  border-bottom: 1px solid #aab4cc;
  background: linear-gradient(transparent, #a9b3cc) right / 1px 100% no-repeat;
}
.cells thead th:first-child { width: 43px; }
.cells thead th:nth-child(2) { width: 98px; }
.corner { display: block; margin: 0 6px 0 auto; width: 0; height: 0; border: 7px solid #b9bcc2; border-top-color: transparent; border-left-color: transparent; }
.cells thead th.sel { background: #d2d5de; color: var(--green); border-bottom-color: var(--green); box-shadow: inset 0 -1px var(--green); }
.cells tbody th {
  padding-bottom: 2px;
  border-right: 1px solid #aab4cc;
  background: linear-gradient(to right, transparent, #b4bdd2) bottom / 100% 1px no-repeat;
}
.cells tbody th.sel { background: #d2d5de; color: var(--green); border-right: 2px solid var(--green); }
.cells tbody td { background: #fff; border: solid var(--cell); border-width: 0 1px 1px 0; }
.cells tbody tr:first-child > * { height: 26px; }
.cells .time { padding: 4px 3px 0 0; text-align: right; font: 16px/18px "Liberation Mono", monospace; }
.cells .num { padding-right: 2px; text-align: right; font-size: 20px; }
.cells td.active { position: relative; overflow: visible; }
.cells .active::before { content: ""; position: absolute; inset: -2px -3px -3px -2px; border: 3px solid var(--green); }
.cells .active::after { content: ""; position: absolute; right: -4px; bottom: -4px; width: 7px; height: 7px; background: var(--green); border: solid #fff; border-width: 1px 0 0 1px; }
.pointer { position: absolute; left: 253px; top: 50px; width: 140px; height: 84px; filter: drop-shadow(2px 3px 2px #555); }
.shaft { stroke: red; stroke-width: 3; }
.head { stroke: red; fill: red; }

.v-side { display: flex; flex-direction: column; padding-left: 2px; border-left: 1px solid var(--line); }
.grip { width: 10px; height: 4px; margin: 5px 2px; border: solid #8b98b2; border-width: 1px 0; }
.v-scroll { flex: 1; display: flex; flex-direction: column; align-items: center; background: #e8e9ef; padding: 8px 0 7px; }
.v-thumb { flex: 1; width: 12px; border-radius: 6px; background: #d4d7e0; margin: 10px 0 52px; }
.arrow { width: 0; height: 0; border: 3px solid transparent; }
.a-up { border-width: 0 3px 3px; border-bottom-color: var(--soft); }
.a-down { border-width: 3px 3px 0; border-top-color: var(--soft); }
.a-left { border-width: 3px 3px 3px 0; border-right-color: var(--soft); }
.a-right { border-width: 3px 0 3px 3px; border-left-color: var(--soft); }

.sheet-bar { display: flex; align-items: center; height: 22px; border-top: 1px solid var(--line); }
.sheet-nav { display: flex; padding-left: 8px; color: #9aa0ac; gap: 1px; }
.sheet-tab { width: 73px; height: 21px; margin-left: 9px; background: #fff; border: solid var(--line); border-width: 0 1px; font: 700 12px/16px "Noto Sans", sans-serif; color: var(--green); }
.add-sheet { margin-left: -2px; }
.h-side { display: flex; align-items: center; gap: 5px; width: 645px; margin-left: auto; margin-right: 23px; }
.grip-v { width: 4px; height: 10px; border: solid #8b98b2; border-width: 0 1px; }
.h-scroll { flex: 1; display: flex; align-items: center; height: 14px; background: #e8e9ef; padding: 0 8px; }
.h-thumb { flex: 1; height: 12px; border-radius: 6px; background: #d4d7e0; margin: 0 60px 0 10px; }

/* Selection pane */
.pane { display: flex; flex-direction: column; padding: 3px 11px 24px 12px; border-right: 1px solid var(--line); color: #4a5876; }
.pane-head { display: flex; align-items: center; height: 24px; }
.pane-head .caret { display: flex; align-items: center; margin-left: -3px; margin-right: auto; }
.pane-head .icon-btn:last-child { margin-right: -10px; }
.pane h2 { font-size: 14px; line-height: 20px; margin: 10px 0 7px; }
.objects { flex: 1; background: #fff; border: 1px solid var(--line); border-radius: 2px; }
.order { display: flex; align-items: center; gap: 10px; margin: 7px 0 6px; color: var(--ink); }
.order button, .show-all button { height: 24px; border: 1px solid var(--line); background: #f8f9fb; color: #8e99ae; }
.order button { width: 23px; }
.show-all { display: flex; gap: 10px; }
.show-all button { width: 65px; }

/* Side strip */
.strip { display: flex; flex-direction: column; align-items: center; gap: 4px; padding: 11px 1px 0 0; color: #2f3a54; }
.strip-grip { width: 20px; height: 4px; border: solid #c9ccd4; border-width: 1px 0; margin-bottom: 9px; }
.strip button { width: 32px; height: 32px; border-radius: 2px; }
.strip .on { background: #dadfe7; }
.strip .dim { color: #9aa2b4; }
.strip-end { margin-top: auto; width: 38px; height: 43px; border-top: 1px solid var(--line); display: flex; align-items: center; justify-content: center; padding-top: 8px; }

/* Status bar */
.status { display: flex; align-items: center; height: 28px; padding: 0 10px 2px 16px; border-top: 1px solid var(--line); }
.status .bar { height: 14px; margin: 0 15px; }
.status-end { display: flex; align-items: center; margin-left: auto; }
.status .caret { display: flex; align-items: center; }
.status .move { margin-left: 7px; }
.status-end > .bar { margin: 0 9px 0 13px; }
.status-end .views + .bar { margin: 0 10px; }
.views { display: flex; gap: 3px; }
.views button { width: 24px; height: 24px; border-radius: 2px; }
.views .on { background: #dadfe7; }
.zoom { font: 13px/16px "Noto Sans", sans-serif; }
.status .zoom { width: 43px; margin-right: 4px; justify-content: space-between; }
.zoom-range { width: 144px; height: 16px; margin: 0 0 0 4px; appearance: none; background: linear-gradient(to right, var(--ink) 53%, #dcdfe6 53%) center / 100% 1px no-repeat; }
.zoom-range::-webkit-slider-thumb { appearance: none; width: 12px; height: 12px; border: 1px solid #444; border-radius: 6px; background: #f8f8f8; }

/* Floating desktop widgets */
.thermo { position: absolute; right: 0; top: 652px; width: 12px; height: 56px; }
.ime { position: absolute; right: 0; top: 859px; width: 128px; height: 26px; display: flex; align-items: center; gap: 8px; padding-left: 11px; background: #fff; border: 1px solid #b4cbe8; color: #0b6bd3; }
.ime b { font-size: 15px; line-height: 20px; width: 15px; }
.ime-logo { position: absolute; left: -27px; top: -5px; width: 32px; height: 32px; stroke: none; }
.meter { position: absolute; right: 6px; top: 899px; width: 119px; height: 60px; display: flex; align-items: center; }
.rates { width: 90px; height: 42px; border-radius: 21px 0 0 21px; background: #30343f; color: #a1a5ad; box-shadow: 0 0 4px #888; }
.rates p { display: flex; align-items: center; width: 46px; margin-left: 10px; height: 21px; gap: 1px; font: 9px/21px "Noto Sans", sans-serif; }
.rates b { margin-left: auto; font-size: 11px; font-weight: 600; color: #fff; }
.blue { color: #4db4ed; }
.green { color: #39b34a; }
.dial { position: absolute; right: 0; top: 0; width: 60px; height: 60px; border-radius: 30px; background: #515767; border: 1px solid #3c4150; box-shadow: 0 0 4px #777; color: #f1f2f4; display: flex; align-items: center; justify-content: center; }
.dial svg { position: absolute; inset: 0; }
.dial span { font: 300 24px/28px "Open Sans", "Noto Sans", sans-serif; }
.dial small { font-size: 10px; }
.watermark { position: absolute; right: 10px; top: 989px; display: flex; opacity: .85; }
.watermark > svg { width: 44px; height: 42px; stroke: none; }
.watermark div { display: flex; flex-direction: column; width: 106px; }
.watermark strong { font-size: 21px; line-height: 22px; font-weight: 500; color: #3f83c9; white-space: nowrap; }
.watermark em { font: 700 16px/20px "Liberation Sans", sans-serif; color: #5ec48a; }
```
FILE: app.js
```js
const COLUMNS = "ABCDEFGHIJKLMNOPQ".split("");
const ROWS = 34;
const values = {
  A1: ["14:03:43", "time"],
  A2: ["15:25:33", "time"],
  A3: ["13:34:23", "time"],
  A4: ["16:45:35", "time"],
  B1: ["14", "num"],
  B2: ["", "active"]
};

const table = document.querySelector(".cells");
const headCells = COLUMNS.map(c => `<th${c === "B" ? ' class="sel"' : ""}>${c}</th>`).join("");
table.tHead.innerHTML = `<tr><th><span class="corner"></span></th>${headCells}</tr>`;

let body = "";
for (let r = 1; r <= ROWS; r++) {
  const cells = COLUMNS.map(c => {
    const [text, kind] = values[c + r] || ["", ""];
    return kind ? `<td class="${kind}">${text}</td>` : "<td></td>";
  }).join("");
  body += `<tr><th${r === 2 ? ' class="sel"' : ""}>${r}</th>${cells}</tr>`;
}
table.tBodies[0].innerHTML = body;
```
